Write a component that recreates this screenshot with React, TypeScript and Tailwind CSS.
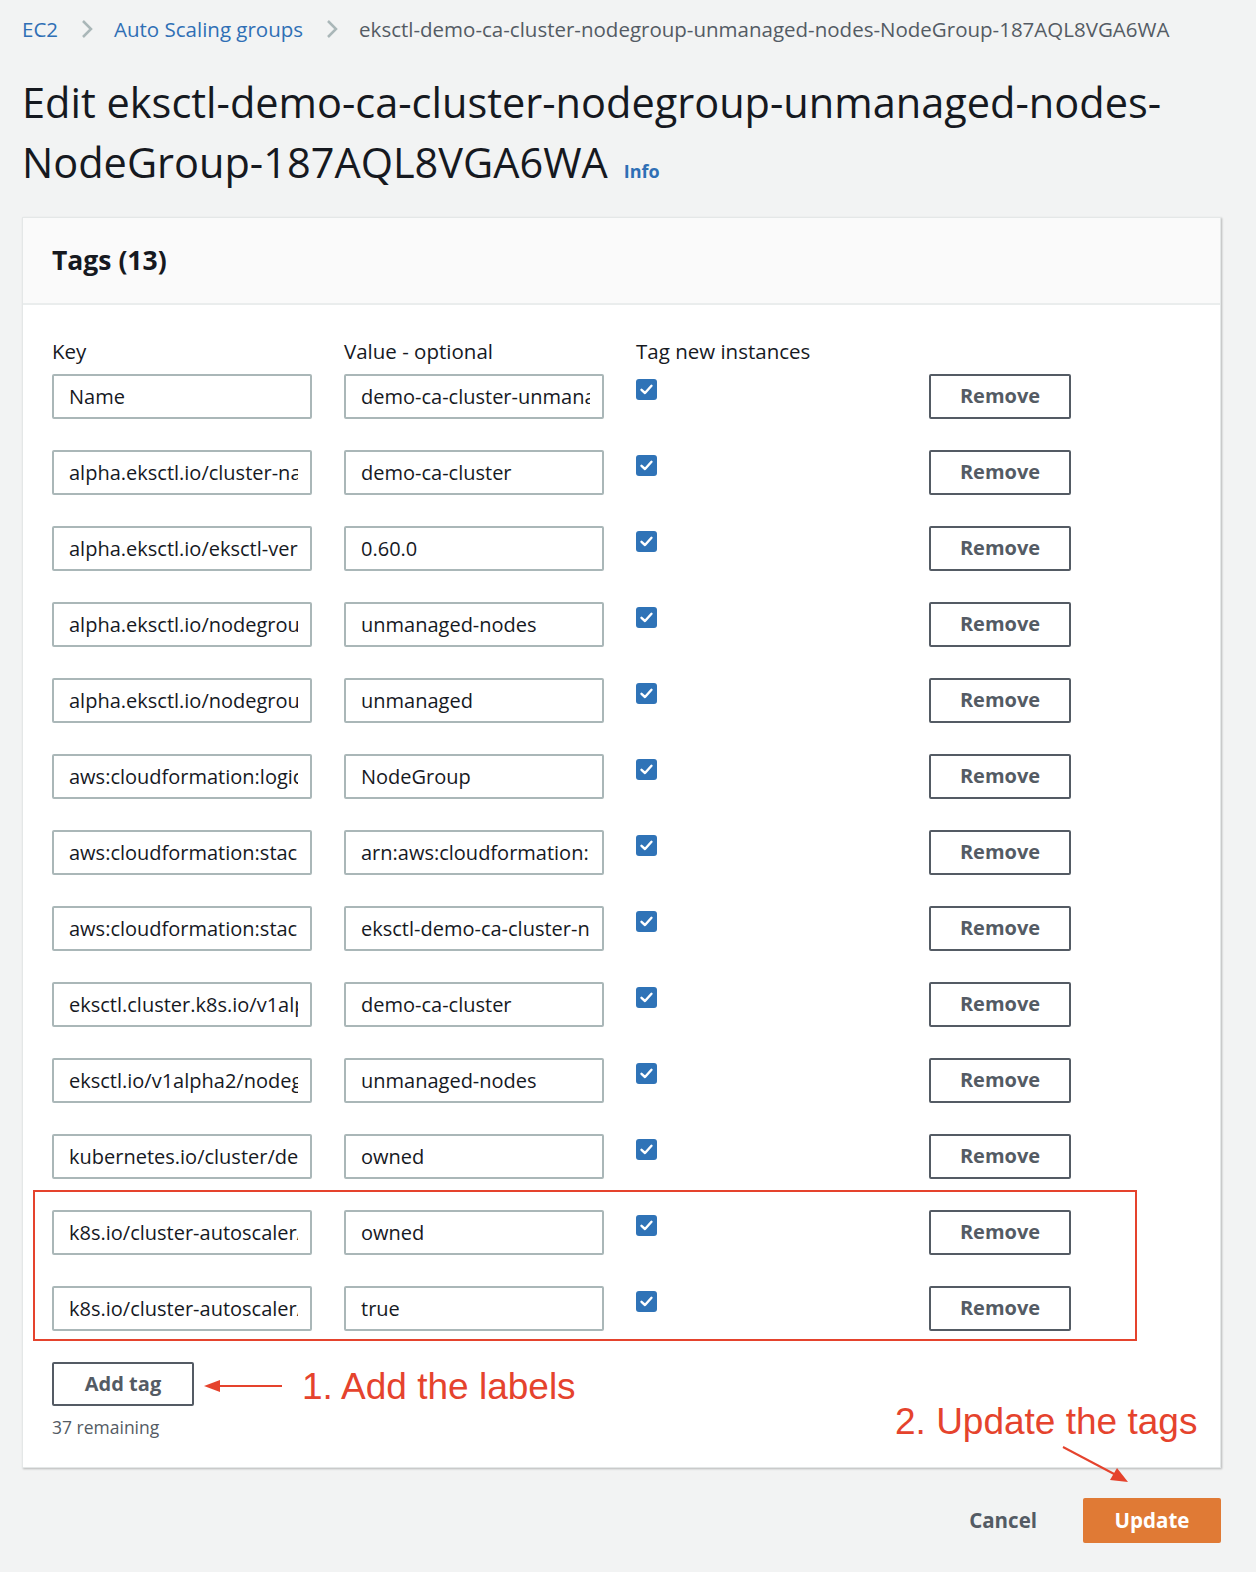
import React from "react";

type Tag = {
  k: string;
  v: string;
};

const tags: Tag[] = [
  { k: "Name", v: "demo-ca-cluster-unmanaged-nodes-Node" },
  { k: "alpha.eksctl.io/cluster-name", v: "demo-ca-cluster" },
  { k: "alpha.eksctl.io/eksctl-version", v: "0.60.0" },
  { k: "alpha.eksctl.io/nodegroup-name", v: "unmanaged-nodes" },
  { k: "alpha.eksctl.io/nodegroup-type", v: "unmanaged" },
  { k: "aws:cloudformation:logical-id", v: "NodeGroup" },
  { k: "aws:cloudformation:stack-id", v: "arn:aws:cloudformation:us-east-1" },
  { k: "aws:cloudformation:stack-name", v: "eksctl-demo-ca-cluster-nodegroup" },
  { k: "eksctl.cluster.k8s.io/v1alpha1/cluster-name", v: "demo-ca-cluster" },
  { k: "eksctl.io/v1alpha2/nodegroup-name", v: "unmanaged-nodes" },
  { k: "kubernetes.io/cluster/demo-ca-cluster", v: "owned" },
  { k: "k8s.io/cluster-autoscaler/demo-ca-cluster", v: "owned" },
  { k: "k8s.io/cluster-autoscaler/enabled", v: "true" },
];

function Chevron() {
  return (
    <svg width="14" height="22" viewBox="0 0 14 22" className="ml-[22px] mr-[20px]">
      <path d="M3 3 L11 11 L3 19" fill="none" stroke="#aab7b8" strokeWidth="2.5" />
    </svg>
  );
}

function Check() {
  return (
    <div className="mt-[5px] w-[21px] h-[21px] rounded-[3px] bg-[#2f73b7] flex items-center justify-center">
      <svg width="15" height="15" viewBox="0 0 15 15">
        <path d="M2.5 7.8 L6 11 L12.5 3.8" fill="none" stroke="#fff" strokeWidth="2.4" strokeLinecap="round" strokeLinejoin="round" />
      </svg>
    </div>
  );
}

function Field({ value }: { value: string }) {
  return (
    <input
      readOnly
      value={value}
      className="w-[260px] h-[45px] pl-[15px] pr-3 bg-white border-2 border-[#aab7b8] rounded-[2px] text-[20px] text-[#16191f] outline-none"
    />
  );
}

export default function App() {
  return (
    <div
      className="relative min-h-[1572px] bg-[#f2f3f3] px-[22px] pt-[12px] text-[#16191f]"
      style={{ fontFamily: '"Open Sans", "Noto Sans", sans-serif' }}
    >
      {/* breadcrumb */}
      <div className="flex items-center h-[34px] text-[20.5px]">
        <span className="text-[#2f6fb5]">EC2</span>
        <Chevron />
        <span className="text-[#2f6fb5]">Auto Scaling groups</span>
        <Chevron />
        <span className="text-[#545b64] whitespace-nowrap">eksctl-demo-ca-cluster-nodegroup-unmanaged-nodes-NodeGroup-187AQL8VGA6WA</span>
      </div>

      <h1 className="mt-[26px] text-[41.5px] leading-[60px] whitespace-nowrap">
        Edit eksctl-demo-ca-cluster-nodegroup-unmanaged-nodes-
        <br />
        NodeGroup-187AQL8VGA6WA
        <span className="ml-4 text-[18px] font-bold text-[#2f6fb5]">Info</span>
      </h1>

      <div className="mt-[16px] w-[1199px] bg-white border border-[#e4e7e7] shadow-[1px_1px_2px_rgba(0,0,0,0.25)]">
        <div className="h-[87px] bg-[#fafafa] border-b-2 border-[#eaeded] px-[29px] flex items-center">
          <h2 className="text-[26.5px] font-bold">Tags (13)</h2>
        </div>

        <div className="relative px-[29px] pt-[31px] pb-[27px]">
          <div className="grid grid-cols-[260px_260px_261px_142px] gap-x-8 text-[20.5px] mb-[7px]">
            <span>Key</span>
            <span>Value - optional</span>
            <span>Tag new instances</span>
          </div>

          <div className="flex flex-col gap-[31px]">
            {tags.map((t, i) => (
              <div key={i} className="grid grid-cols-[260px_260px_261px_142px] gap-x-8 items-start">
                <Field value={t.k} />
                <Field value={t.v} />
                <Check />
                <button className="h-[45px] border-2 border-[#545b64] rounded-[2px] text-[20px] font-bold text-[#545b64]">
                  Remove
                </button>
              </div>
            ))}
          </div>

          {/* annotation box */}
          <div className="absolute left-[10px] top-[885px] w-[1104px] h-[151px] border-2 border-[#e5432d]" />

          <button className="mt-[31px] w-[142px] h-[44px] border-2 border-[#545b64] rounded-[2px] text-[20px] font-bold text-[#545b64]">
            Add tag
          </button>
          <div className="mt-[8px] text-[17.5px] text-[#545b64]">37 remaining</div>
        </div>
      </div>

      <div className="flex justify-end items-center mt-[30px] w-[1199px]">
        <span className="text-[20.5px] font-bold text-[#545b64] mr-[46px]">Cancel</span>
        <button className="w-[138px] h-[45px] rounded-[2px] bg-[#e07a35] text-white text-[20.5px] font-bold">
          Update
        </button>
      </div>

      {/* annotations */}
      <svg className="absolute left-0 top-0 pointer-events-none" width="1256" height="1572">
        <line x1="282" y1="1386" x2="214" y2="1386" stroke="#e5432d" strokeWidth="2" />
        <polygon points="204,1386 220,1380 220,1392" fill="#e5432d" />
        <line x1="1063" y1="1447" x2="1116" y2="1475" stroke="#e5432d" strokeWidth="2" />
        <polygon points="1128,1482 1110,1480 1117,1468" fill="#e5432d" />
      </svg>
      <div
        className="absolute left-[302px] top-[1365px] text-[37px] leading-[44px] text-[#e5432d]"
        style={{ fontFamily: '"Liberation Sans", Arial, sans-serif' }}
      >
        1. Add the labels
      </div>
      <div
        className="absolute left-[895px] top-[1400px] text-[37px] leading-[44px] text-[#e5432d]"
        style={{ fontFamily: '"Liberation Sans", Arial, sans-serif' }}
      >
        2. Update the tags
      </div>
    </div>
  );
}
